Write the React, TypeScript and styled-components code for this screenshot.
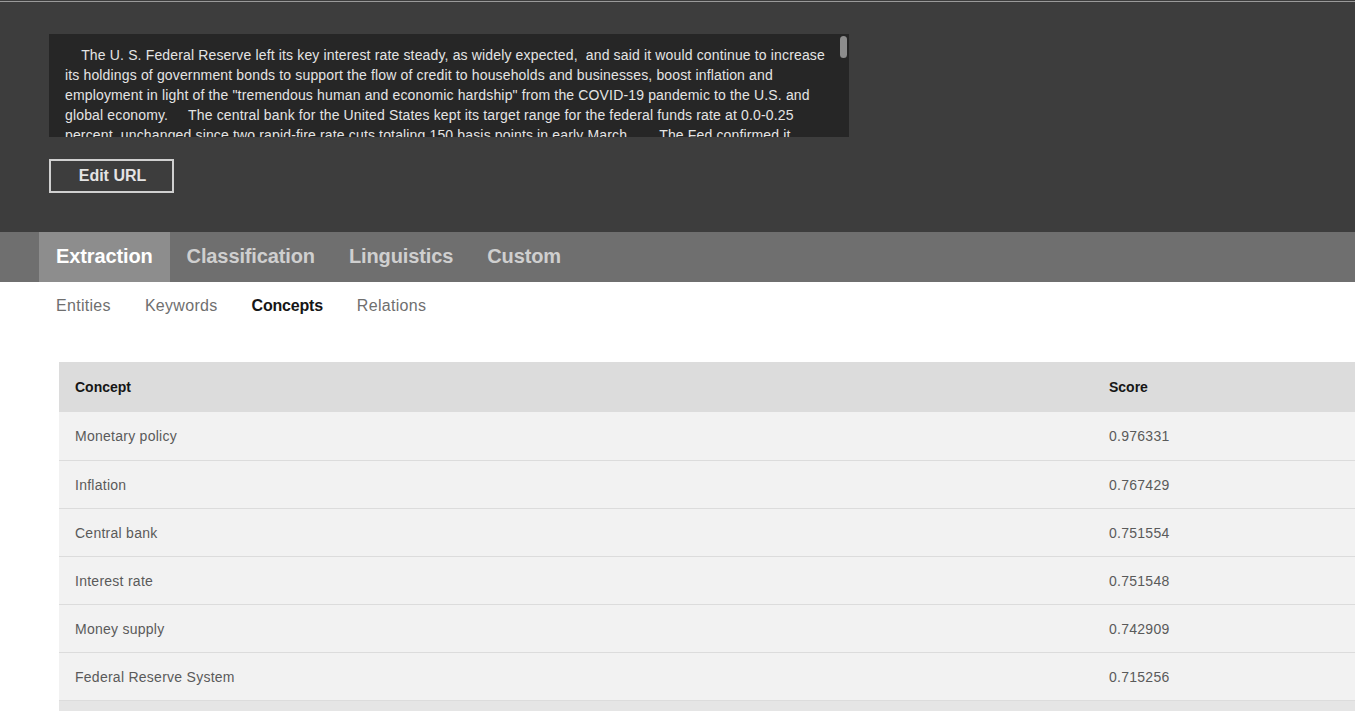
import React from "react";
import styled, { createGlobalStyle } from "styled-components";

const GlobalStyle = createGlobalStyle`
  html, body {
    margin: 0;
    padding: 0;
    overflow: hidden;
    background: #ffffff;
  }
  body {
    font-family: "Liberation Sans", Arial, sans-serif;
  }
  * { box-sizing: border-box; }
`;

const Page = styled.div`
  width: 1355px;
  height: 711px;
  overflow: hidden;
`;

const Header = styled.header`
  background: #3d3d3d;
  border-top: 1px solid #3d3d3d;
  box-shadow: inset 0 1px 0 #9a9a9a;
  height: 232px;
  padding: 33px 0 0 49px;
  display: flex;
  flex-direction: column;
  align-items: flex-start;
  gap: 22px;
`;

const TextFrame = styled.div`
  position: relative;
  width: 800px;
  height: 103px;
  background: #262626;
`;

const TextBox = styled.div`
  width: 100%;
  height: 100%;
  color: #e4e4e4;
  font-size: 14px;
  line-height: 20px;
  letter-spacing: 0.15px;
  padding: 11px 18px 10px 16px;
  white-space: pre-wrap;
  overflow: hidden;
`;

const ScrollThumb = styled.div`
  position: absolute;
  top: 2px;
  right: 2px;
  width: 7px;
  height: 22px;
  border-radius: 4px;
  background: #8d8d8d;
`;

const EditButton = styled.button`
  width: 125px;
  height: 34px;
  background: transparent;
  border: 2px solid #d0d0d0;
  color: #e4e4e4;
  font-family: inherit;
  font-size: 16px;
  font-weight: 700;
  padding: 0 0 0 2px;
  cursor: pointer;
`;

const TabBar = styled.nav`
  height: 50px;
  background: #6f6f6f;
  display: flex;
  padding-left: 39px;
`;

const Tab = styled.div<{ $active?: boolean }>`
  display: flex;
  align-items: center;
  padding: 0 17px 1px;
  font-size: 20px;
  font-weight: 700;
  letter-spacing: -0.12px;
  background: ${(p) => (p.$active ? "#8d8d8d" : "transparent")};
  color: ${(p) => (p.$active ? "#ffffff" : "#cfcfcf")};
`;

const SubTabs = styled.div`
  display: flex;
  padding: 8px 0 0 39px;
  height: 80px;
`;

const SubTab = styled.div<{ $active?: boolean }>`
  height: 32px;
  display: flex;
  align-items: center;
  padding: 0 17px;
  font-size: 16px;
  letter-spacing: ${(p) => (p.$active ? "-0.2px" : "0.3px")};
  font-weight: ${(p) => (p.$active ? 700 : 400)};
  color: ${(p) => (p.$active ? "#161616" : "#6f6f6f")};
`;

const TableWrap = styled.div`
  padding-left: 59px;
`;

const Table = styled.div`
  width: 1340px;
  display: flex;
  flex-direction: column;
`;

const HeadRow = styled.div`
  height: 50px;
  padding-bottom: 1px;
  background: #dcdcdc;
  display: grid;
  grid-template-columns: 1034px 1fr;
  align-items: center;
  font-size: 14px;
  font-weight: 700;
  color: #161616;
`;

const Row = styled.div<{ $hover?: boolean }>`
  height: 48px;
  background: ${(p) => (p.$hover ? "#e5e5e5" : "#f2f2f2")};
  border-top: 1px solid #dcdcdc;
  display: grid;
  grid-template-columns: 1034px 1fr;
  align-items: center;
  font-size: 14px;
  letter-spacing: 0.26px;
  color: #5a5a5a;
  &:first-of-type {
    border-top: none;
  }
`;

const Cell = styled.div`
  padding-left: 16px;
`;

const Body = styled.div`
  display: flex;
  flex-direction: column;
`;

const article = `    The U. S. Federal Reserve left its key interest rate steady, as widely expected,  and said it would continue to increase its holdings of government bonds to support the flow of credit to households and businesses, boost inflation and employment in light of the "tremendous human and economic hardship" from the COVID-19 pandemic to the U.S. and global economy.     The central bank for the United States kept its target range for the federal funds rate at 0.0-0.25 percent, unchanged since two rapid-fire rate cuts totaling 150 basis points in early March.       The Fed confirmed it would keep rates near zero until it is confident that the economy has weathered recent events and is on track to achieve its maximum employment and price stability goals.      Policymakers said the ongoing public health crisis will weigh heavily on economic activity, employment, and inflation in the near term, and poses considerable risks to the economic outlook over the medium term.`;

const concepts: [string, string][] = [
  ["Monetary policy", "0.976331"],
  ["Inflation", "0.767429"],
  ["Central bank", "0.751554"],
  ["Interest rate", "0.751548"],
  ["Money supply", "0.742909"],
  ["Federal Reserve System", "0.715256"],
  ["Federal funds rate", "0.702114"],
];

export default function App() {
  return (
    <>
      <GlobalStyle />
      <Page>
        <Header>
          <TextFrame>
            <TextBox>{article}</TextBox>
            <ScrollThumb />
          </TextFrame>
          <EditButton>Edit URL</EditButton>
        </Header>
        <TabBar>
          <Tab $active>Extraction</Tab>
          <Tab>Classification</Tab>
          <Tab>Linguistics</Tab>
          <Tab>Custom</Tab>
        </TabBar>
        <SubTabs>
          <SubTab>Entities</SubTab>
          <SubTab>Keywords</SubTab>
          <SubTab $active>Concepts</SubTab>
          <SubTab>Relations</SubTab>
        </SubTabs>
        <TableWrap>
          <Table>
            <HeadRow>
              <Cell>Concept</Cell>
              <Cell>Score</Cell>
            </HeadRow>
            <Body>
              {concepts.map(([name, score], i) => (
                <Row key={name} $hover={i === concepts.length - 1}>
                  <Cell>{name}</Cell>
                  <Cell>{score}</Cell>
                </Row>
              ))}
            </Body>
          </Table>
        </TableWrap>
      </Page>
    </>
  );
}
